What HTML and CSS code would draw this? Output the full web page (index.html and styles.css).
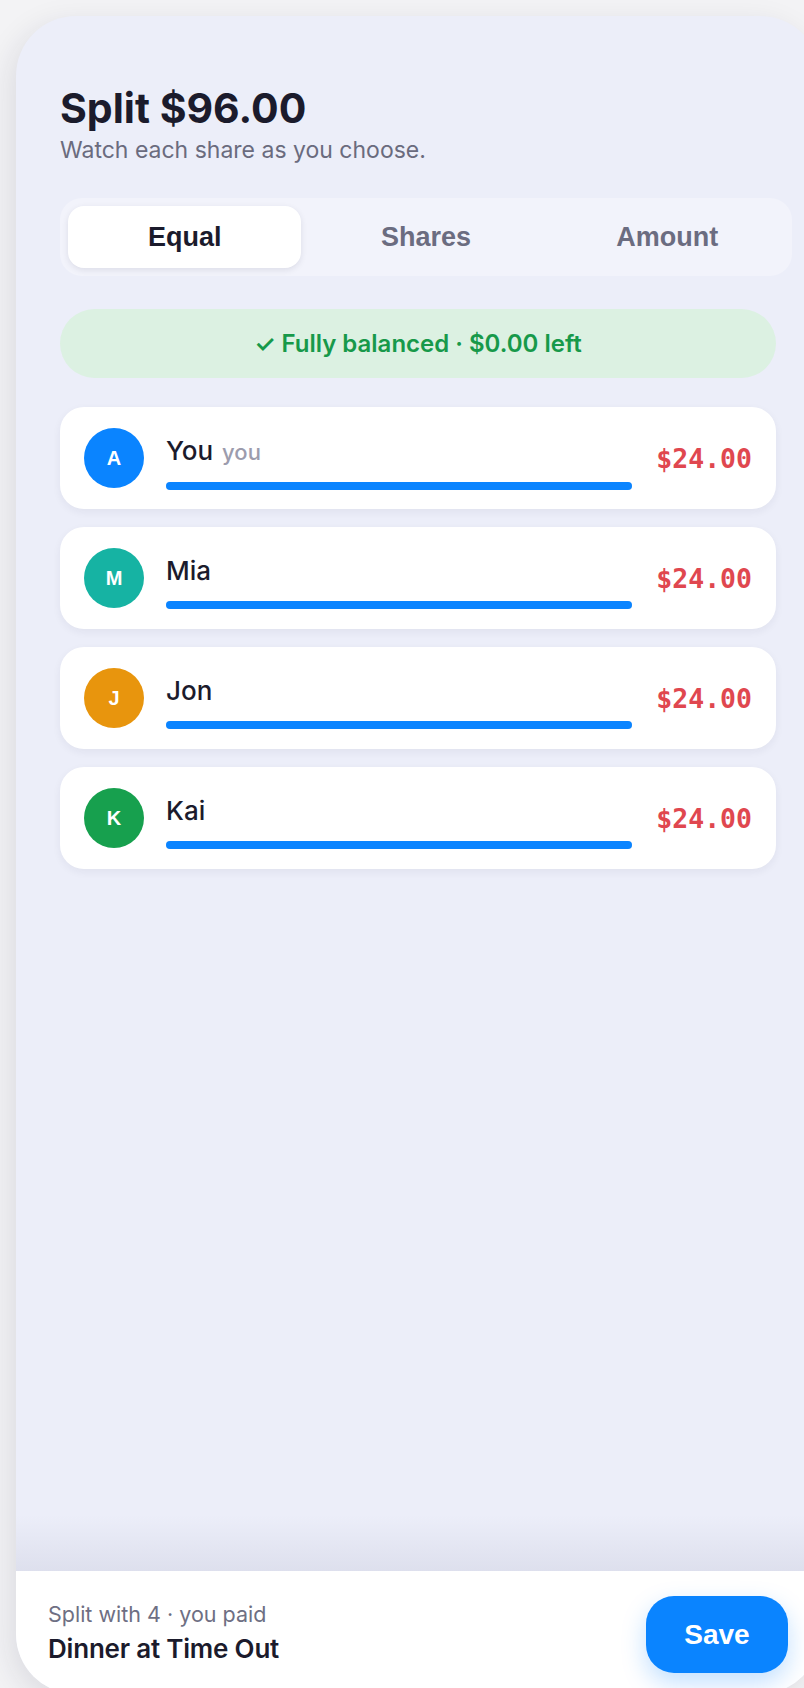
FILE: index.html
```html
<!DOCTYPE html>
<html lang="en">
<head>
  <meta charset="UTF-8">
  <meta name="viewport" content="width=device-width, initial-scale=1.0">
  <title>Split bill</title>
  <link rel="stylesheet" href="styles.css">
</head>
<body>
  <div class="phone">
    <div class="content">
      <h1>Split $96.00</h1>
      <p class="sub">Watch each share as you choose.</p>

      <div class="tabs">
        <button class="tab active">Equal</button>
        <button class="tab">Shares</button>
        <button class="tab">Amount</button>
      </div>

      <div class="balance">✓ Fully balanced · $0.00 left</div>

      <div class="people">
        <div class="person">
          <div class="avatar blue">A</div>
          <div class="info">
            <div class="name">You <span class="me">you</span></div>
            <div class="bar"><div class="fill" style="width: 100%"></div></div>
          </div>
          <div class="amount">$24.00</div>
        </div>
        <div class="person">
          <div class="avatar teal">M</div>
          <div class="info">
            <div class="name">Mia</div>
            <div class="bar"><div class="fill" style="width: 100%"></div></div>
          </div>
          <div class="amount">$24.00</div>
        </div>
        <div class="person">
          <div class="avatar orange">J</div>
          <div class="info">
            <div class="name">Jon</div>
            <div class="bar"><div class="fill" style="width: 100%"></div></div>
          </div>
          <div class="amount">$24.00</div>
        </div>
        <div class="person">
          <div class="avatar green">K</div>
          <div class="info">
            <div class="name">Kai</div>
            <div class="bar"><div class="fill" style="width: 100%"></div></div>
          </div>
          <div class="amount">$24.00</div>
        </div>
      </div>
    </div>

    <div class="footer">
      <div class="meta">
        <div class="small">Split with 4 · you paid</div>
        <div class="title">Dinner at Time Out</div>
      </div>
      <button class="save">Save</button>
    </div>
  </div>
</body>
</html>
```

FILE: styles.css
```css
html, body { margin: 0; padding: 0; }
body { background: #f3f3f5; font-family: Inter, 'Noto Sans', sans-serif; color: #1b1b2c; overflow: hidden; height: 1688px; }

.phone { margin: 16px 0 0 16px; width: 804px; height: 1678px; background: #eceef9; border-radius: 60px; overflow: hidden; display: flex; flex-direction: column; box-shadow: -6px 8px 30px rgba(30, 30, 60, 0.10); }
.content { flex: 1; padding: 68px 44px 0 44px; }

h1 { margin: 0; font-size: 41px; font-weight: 700; letter-spacing: 0; line-height: 48px; }
.sub { margin: 4px 0 0; font-size: 23px; color: #6a6b7e; line-height: 28px; letter-spacing: 0; }

.tabs { margin-top: 34px; width: calc(100% + 16px); box-sizing: border-box; display: grid; grid-template-columns: 1fr 1fr 1fr; gap: 8px; padding: 8px; background: #f2f3fb; border-radius: 22px; }
.tab { height: 62px; border: 0; background: transparent; border-radius: 16px; font-family: 'Liberation Sans', Arial, sans-serif; font-weight: 700; font-size: 27px; color: #6b6c80; }
.tab.active { background: #fff; color: #1b1b2c; box-shadow: 0 2px 6px rgba(30, 30, 60, 0.10); }

.balance { margin-top: 33px; height: 69px; display: flex; align-items: center; justify-content: center; background: #dcf1e2; color: #17994a; border-radius: 35px; font-size: 24px; font-weight: 600; letter-spacing: 0; }

.people { margin-top: 29px; display: flex; flex-direction: column; gap: 18px; }
.person { height: 102px; box-sizing: border-box; padding: 0 24px; display: flex; align-items: center; gap: 22px; background: #fff; border-radius: 24px; box-shadow: 0 3px 8px rgba(30, 30, 60, 0.06); }
.avatar { width: 60px; height: 60px; border-radius: 50%; flex: none; display: flex; align-items: center; justify-content: center; color: #fff; font-family: 'Liberation Sans', Arial, sans-serif; font-weight: 700; font-size: 20px; }
.avatar.blue { background: #0a84ff; }
.avatar.teal { background: #16b3a3; }
.avatar.orange { background: #e8950d; }
.avatar.green { background: #17a04e; }

.info { flex: 1; padding-top: 9px; }
.name { font-size: 26px; font-weight: 500; line-height: 30px; letter-spacing: 0; }
.me { font-size: 22px; color: #9c9cad; margin-left: 2px; }
.bar { margin-top: 15px; height: 8px; background: #e6e8f3; border-radius: 4px; }
.fill { height: 100%; background: #0a84ff; border-radius: 4px; }
.amount { margin-left: 2px; font-family: 'DejaVu Sans Mono', monospace; font-weight: 700; font-size: 26.5px; color: #e0474f; }

.footer { position: relative; height: 123px; flex: none; background: #fff; display: flex; align-items: center; justify-content: space-between; padding: 0 32px; }
.footer::before { content: ""; position: absolute; left: 0; right: 0; bottom: 100%; height: 56px; background: linear-gradient(rgba(220, 222, 236, 0), rgba(220, 222, 236, 0.9)); }
.small { font-size: 21.5px; color: #6e6f83; letter-spacing: 0; }
.title { margin-top: 6px; font-size: 26px; font-weight: 600; letter-spacing: -0.2px; }
.save { width: 142px; height: 77px; border: 0; border-radius: 28px; background: #0a84ff; color: #fff; font-family: 'Liberation Sans', Arial, sans-serif; font-weight: 700; font-size: 28px; box-shadow: 0 10px 24px rgba(10, 132, 255, 0.25); margin-top: 4px; }
```
